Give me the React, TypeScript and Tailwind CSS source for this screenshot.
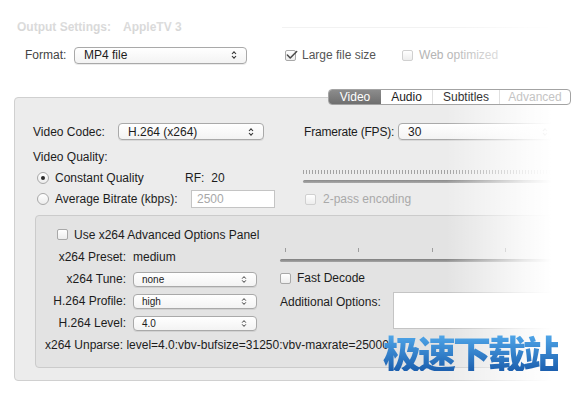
import { Check } from "lucide-react";

function Arrows({ small }: { small?: boolean }) {
  return (
    <svg width="6" height={small ? 9 : 10} viewBox="0 0 6 10" className="shrink-0">
      <path d="M1 4 L3 1.8 L5 4" fill="none" stroke="#333" strokeWidth="1.1" />
      <path d="M1 6 L3 8.2 L5 6" fill="none" stroke="#333" strokeWidth="1.1" />
    </svg>
  );
}

function Select({ value, width, small }: { value: string; width: string; small?: boolean }) {
  return (
    <div
      className={`${width} ${
        small ? "h-[15px] text-[10px] pl-[8px]" : "h-[17px] pl-[9px]"
      } flex items-center justify-between pr-[9px] rounded-[4px] border border-[#a9a9a9] bg-gradient-to-b from-white to-[#f3f3f3] shadow-[0_1px_0_rgba(0,0,0,0.08)]`}
    >
      <span>{value}</span>
      <Arrows small={small} />
    </div>
  );
}

function Checkbox({ checked, disabled }: { checked?: boolean; disabled?: boolean }) {
  return (
    <div
      className={`w-[11px] h-[11px] rounded-[2px] border ${
        disabled ? "border-[#d0d0d0]" : "border-[#a8a8a8]"
      } bg-gradient-to-b from-white to-[#ededed] relative shrink-0`}
    >
      {checked && (
        <Check className="absolute -top-[3px] -left-[1px] w-[14px] h-[14px] text-[#4a4a4a]" strokeWidth={2.6} />
      )}
    </div>
  );
}

function Radio({ on }: { on?: boolean }) {
  return (
    <div className="w-[12px] h-[12px] rounded-full border border-[#a8a8a8] bg-gradient-to-b from-white to-[#ececec] flex items-center justify-center shrink-0">
      {on && <div className="w-[4px] h-[4px] rounded-full bg-[#2a2a2a]" />}
    </div>
  );
}

export default function App() {
  return (
    <div className="relative w-[581px] h-[394px] overflow-hidden bg-white font-['Liberation_Sans',sans-serif] text-[12px] text-[#1c1c1c]">
      {/* output settings header */}
      <div className="flex items-center h-[14px] mt-[20px] pl-[17px]">
        <span className="font-bold text-[#cfcfcf]">Output Settings:</span>
        <span className="font-bold text-[#cfcfcf] ml-[12px]">AppleTV 3</span>
        <div className="flex-1 h-px bg-[#eeeeee] ml-[100px]" />
      </div>

      {/* format row */}
      <div className="flex items-center h-[18px] mt-[12px] pl-[25px]">
        <span className="w-[49px] text-[#444]">Format:</span>
        <Select value="MP4 file" width="w-[173px]" />
        <div className="ml-[38px] flex items-center gap-[6px]">
          <Checkbox checked />
          <span className="text-[#555]">Large file size</span>
        </div>
        <div className="ml-[26px] flex items-center gap-[6px]">
          <Checkbox disabled />
          <span className="text-[#b4b4b4]">Web optimized</span>
        </div>
      </div>

      {/* tabs */}
      <div className="relative z-10 flex mt-[25px] ml-[328px] h-[16px] w-fit rounded-[4px] border border-[#a3a3a3] bg-white overflow-hidden">
        <div className="w-[52px] flex items-center justify-center bg-gradient-to-b from-[#8c8c8c] to-[#6f6f6f] text-white">
          Video
        </div>
        <div className="w-[52px] flex items-center justify-center border-r border-[#e0e0e0]">Audio</div>
        <div className="w-[67px] flex items-center justify-center border-r border-[#e0e0e0] text-[#333]">
          Subtitles
        </div>
        <div className="w-[70px] flex items-center justify-center text-[#c4c4c4]">Advanced</div>
      </div>

      {/* video panel */}
      <div className="-mt-[8px] ml-[14px] w-[620px] h-[284px] rounded-[4px] border border-[#d0d0d0] bg-[#ececec] pt-[25px] pl-[18px]">
        <div className="flex items-center h-[17px]">
          <span className="w-[85px]">Video Codec:</span>
          <Select value="H.264 (x264)" width="w-[146px]" />
          <span className="ml-[40px] w-[94px] tracking-[-0.2px]">Framerate (FPS):</span>
          <Select value="30" width="w-[160px]" />
        </div>

        <div className="flex">
          <div className="w-[270px]">
            <div className="h-[14px] mt-[10px] flex items-center">Video Quality:</div>
            <div className="h-[14px] mt-[7px] flex items-center pl-[4px]">
              <Radio on />
              <span className="ml-[6px] w-[130px]">Constant Quality</span>
              <span>RF:</span>
              <span className="ml-[7px]">20</span>
            </div>
            <div className="h-[18px] mt-[5px] flex items-center pl-[4px]">
              <Radio />
              <span className="ml-[6px] w-[136px]">Average Bitrate (kbps):</span>
              <div className="w-[84px] h-[18px] bg-white border border-[#c4c4c4] flex items-center pl-[5px] text-[#a8a8a8]">
                2500
              </div>
            </div>
          </div>
          <div className="w-[262px] pt-[30px]">
            <div className="h-[4px] bg-[repeating-linear-gradient(90deg,#a3a3a3_0,#a3a3a3_1px,transparent_1px,transparent_3px)]" />
            <div className="h-[3px] mt-[6px] rounded-full bg-gradient-to-b from-[#8a8a8a] to-[#a9a9a9]" />
            <div className="flex items-center gap-[7px] mt-[9px] h-[14px] pl-[2px]">
              <Checkbox disabled />
              <span className="text-[#a9a9a9]">2-pass encoding</span>
            </div>
          </div>
        </div>

        {/* x264 inner panel */}
        <div className="mt-[7px] ml-[2px] w-[580px] h-[153px] rounded-[4px] border border-[#cbcbcb] bg-[#e3e3e3] pt-[12px]">
          <div className="flex items-center gap-[6px] h-[13px] pl-[21px]">
            <Checkbox />
            <span>Use x264 Advanced Options Panel</span>
          </div>
          <div className="flex mt-[8px]">
            <div className="w-[244px] flex flex-col">
              <div className="flex items-center h-[16px]">
                <span className="w-[90px] text-right">x264 Preset:</span>
                <span className="ml-[7px]">medium</span>
              </div>
              <div className="flex items-center h-[16px] mt-[6px]">
                <span className="w-[90px] text-right">x264 Tune:</span>
                <div className="ml-[7px]">
                  <Select value="none" width="w-[124px]" small />
                </div>
              </div>
              <div className="flex items-center h-[16px] mt-[6px]">
                <span className="w-[90px] text-right">H.264 Profile:</span>
                <div className="ml-[7px]">
                  <Select value="high" width="w-[124px]" small />
                </div>
              </div>
              <div className="flex items-center h-[16px] mt-[6px]">
                <span className="w-[90px] text-right">H.264 Level:</span>
                <div className="ml-[7px]">
                  <Select value="4.0" width="w-[124px]" small />
                </div>
              </div>
            </div>
            <div className="flex-1 pr-[30px]">
              <div className="flex justify-between pl-[5px] pr-[5px] h-[4px] -mt-[1px]">
                <div className="w-px h-[4px] bg-[#9d9d9d]" />
                <div className="w-px h-[4px] bg-[#9d9d9d]" />
                <div className="w-px h-[4px] bg-[#9d9d9d]" />
                <div className="w-px h-[4px] bg-[#9d9d9d]" />
                <div className="w-px h-[4px] bg-[#9d9d9d]" />
              </div>
              <div className="h-[3px] mt-[7px] rounded-full bg-gradient-to-b from-[#7f7f7f] to-[#a5a5a5]" />
              <div className="flex items-center gap-[6px] mt-[9px] h-[14px]">
                <Checkbox />
                <span>Fast Decode</span>
              </div>
              <div className="flex items-start mt-[7px]">
                <span className="w-[113px] mt-[1px]">Additional Options:</span>
                <div className="flex-1 h-[37px] bg-white border border-[#c4c4c4]" />
              </div>
            </div>
          </div>
          <div className="mt-[7px] pl-[9px] h-[14px] flex items-center">
            x264 Unparse: level=4.0:vbv-bufsize=31250:vbv-maxrate=25000
          </div>
        </div>
      </div>

      {/* fade to white on the right and top */}
      <div className="absolute top-0 right-0 w-[135px] h-full bg-[linear-gradient(90deg,rgba(255,255,255,0)_0%,rgba(255,255,255,0.8)_58%,#fff_78%)]" />
      <div className="absolute top-0 left-0 w-full h-[40px] bg-gradient-to-b from-white/70 to-white/0" />

      {/* watermark */}
      <div className="absolute left-[383px] top-[333px] font-['Noto_Sans_CJK_SC',sans-serif] font-black text-[38px] leading-none tracking-[-3px] text-transparent bg-clip-text bg-gradient-to-b from-[#52aaec] to-[#1c5fae]">
        极速下载站
      </div>
    </div>
  );
}
